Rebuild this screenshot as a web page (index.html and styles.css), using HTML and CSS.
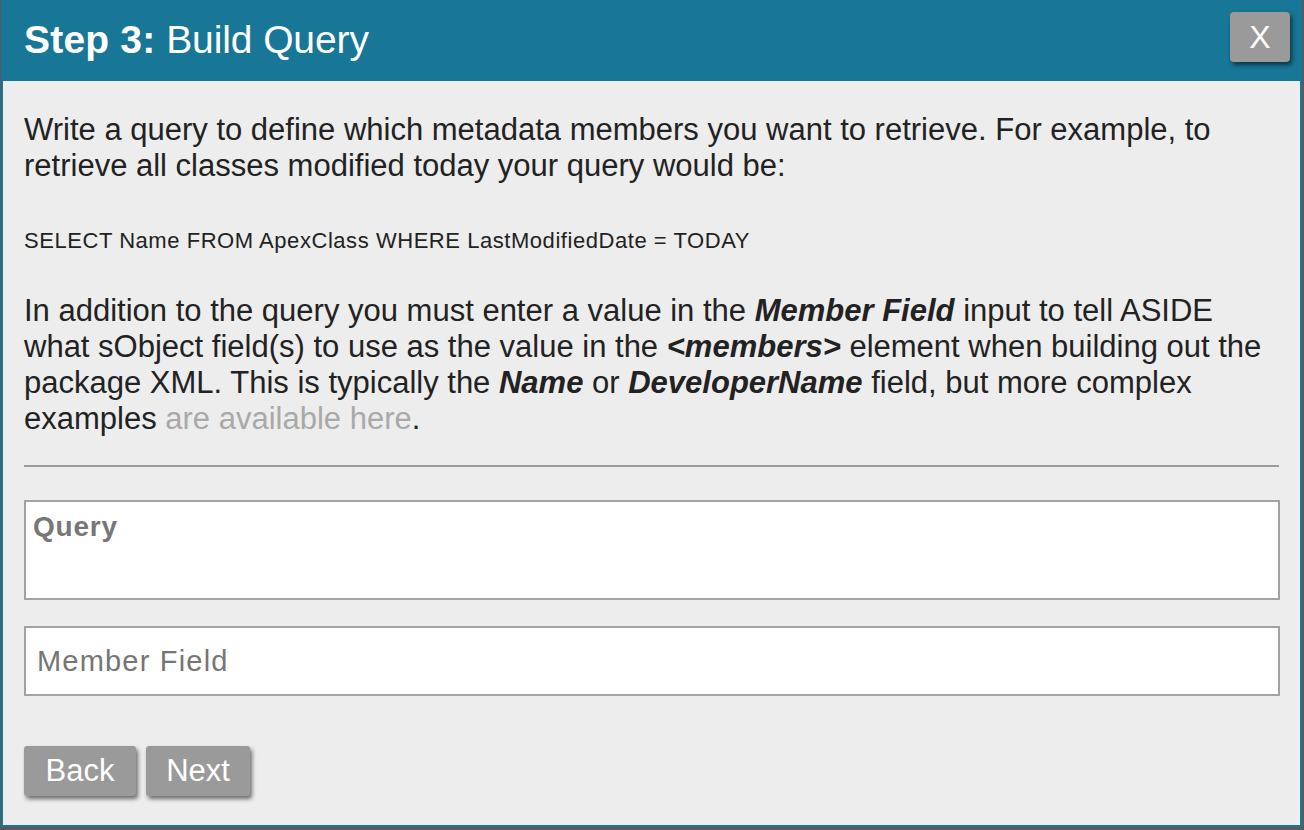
FILE: index.html
```html
<!DOCTYPE html>
<html>
<head>
<meta charset="utf-8">
<link rel="stylesheet" href="styles.css">
</head>
<body>
<div class="modal">
  <div class="modal-header">
    <h1 class="title"><b>Step 3:</b> Build Query</h1>
    <button class="close-btn">X</button>
  </div>
  <div class="modal-body">
    <p class="intro">Write a query to define which metadata members you want to retrieve. For example, to<br>retrieve all classes modified today your query would be:</p>
    <p class="example">SELECT Name FROM ApexClass WHERE LastModifiedDate = TODAY</p>
    <p class="intro second">In addition to the query you must enter a value in the <i><b>Member Field</b></i> input to tell ASIDE<br>what sObject field(s) to use as the value in the <i><b>&lt;members&gt;</b></i> element when building out the<br>package XML. This is typically the <i><b>Name</b></i> or <i><b>DeveloperName</b></i> field, but more complex<br>examples <a class="link" href="#">are available here</a>.</p>
    <hr class="divider">
    <div class="query-box"><span class="query-label">Query</span></div>
    <div class="member-input"><span class="placeholder">Member Field</span></div>
    <div class="actions">
      <button class="btn btn-back">Back</button>
      <button class="btn btn-next">Next</button>
    </div>
  </div>
</div>
</body>
</html>
```

FILE: styles.css
```css
html, body {
  margin: 0;
  padding: 0;
  background: #5a5a5a;
  height: 830px;
  overflow: hidden;
}
body {
  font-family: "Liberation Sans", Arial, sans-serif;
}
.modal {
  margin-left: 1px;
  width: 1301px;
  height: 827px;
  box-sizing: border-box;
  border: 2px solid #187696;
  border-top: 0;
  background: #ededed;
  display: flex;
  flex-direction: column;
}
.modal-header {
  height: 81px;
  flex: none;
  background: #187696;
  display: flex;
  align-items: center;
  justify-content: space-between;
  padding: 0 10px 0 21px;
  box-sizing: border-box;
}
.title {
  margin: 0 0 2px;
  color: #fff;
  font-size: 39px;
  font-weight: normal;
  letter-spacing: -0.1px;
}
.title b { font-weight: bold; letter-spacing: 0.2px; }
.close-btn {
  align-self: flex-start;
  margin-top: 12px;
  width: 60px;
  height: 50px;
  border: 0;
  border-radius: 4px;
  background: #9b9a9a;
  color: #fff;
  font-family: "Liberation Sans", Arial, sans-serif;
  font-size: 32px;
  box-shadow: 2px 3px 4px rgba(0,0,0,0.55);
  padding: 0;
}
.modal-body {
  padding: 31px 20px 0 21px;
  color: #222;
}
.intro {
  margin: 0;
  font-size: 31px;
  letter-spacing: 0;
  line-height: 36px;
  white-space: nowrap;
}
.intro b { font-weight: normal; }
.intro i b { font-weight: bold; }
.example {
  margin: 39px 0 0;
  font-size: 22px;
  letter-spacing: 0.55px;
  line-height: 36px;
}
.second { margin-top: 34px; }
.link {
  color: #a9a9a9;
  text-decoration: none;
}
.divider {
  margin: 28px 1px 0 0;
  border: 0;
  height: 2px;
  background: #9b9b9b;
}
.query-box {
  margin-top: 33px;
  height: 100px;
  box-sizing: border-box;
  border: 2px solid #a3a3a3;
  background: #fff;
  padding: 9px 7px;
}
.query-label {
  font-size: 28px;
  letter-spacing: 0.8px;
  font-weight: bold;
  color: #777;
}
.member-input {
  margin-top: 26px;
  height: 70px;
  box-sizing: border-box;
  border: 2px solid #a3a3a3;
  background: #fff;
  display: flex;
  align-items: center;
  padding-left: 11px;
}
.placeholder {
  font-size: 29px;
  letter-spacing: 1.2px;
  color: #757575;
}
.actions {
  margin-top: 50px;
  display: flex;
  gap: 10px;
}
.btn {
  height: 50px;
  border: 0;
  border-radius: 3px;
  background: #9b9a9a;
  color: #fff;
  font-family: "Liberation Sans", Arial, sans-serif;
  font-size: 31px;
  padding: 0;
  box-shadow: 2px 3px 4px rgba(0,0,0,0.55);
  letter-spacing: 0;
  text-align: center;
}
.btn-back { width: 112px; }
.btn-next { width: 104px; }
```
